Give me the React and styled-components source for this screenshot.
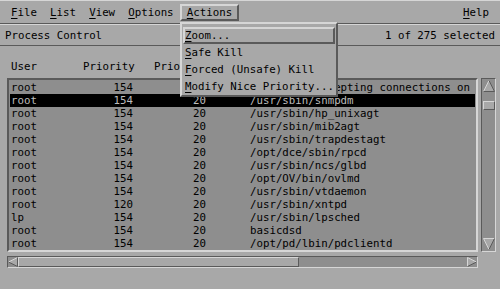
import React from "react";
import styled, { createGlobalStyle } from "styled-components";

const BG = "#a8a8a8";
const LIST = "#8e8e8e";
const LIGHT = "#d6d6d6";
const DARK = "#5a5a5a";

const Global = createGlobalStyle`
  html, body { margin: 0; padding: 0; background: ${BG}; }
  body { font-family: "DejaVu Sans Mono", "Liberation Mono", monospace; font-size: 10.75px; color: #000; }
`;

const Window = styled.div`
  position: relative;
  width: 500px;
  height: 289px;
  background: ${BG};
  display: flex;
  flex-direction: column;
  overflow: hidden;
`;

const MenuBar = styled.div`
  box-sizing: border-box;
  height: 24px;
  display: flex;
  align-items: center;
  padding: 1px 4.4px 0;
  border-top: 1px solid ${LIGHT};
  border-bottom: 1px solid ${DARK};
`;

const MenuItem = styled.div`
  box-sizing: border-box;
  height: 17px;
  line-height: 13px;
  padding: 0 4.6px;
  border: 2px solid transparent;
  white-space: pre;
  ${(p) =>
    p.$active &&
    `border-color: ${LIGHT} ${DARK} ${DARK} ${LIGHT};`}
  ${(p) => p.$right && `margin-left: auto;`}
`;

const Mn = styled.span`
  text-decoration: underline;
  text-underline-offset: 2px;
`;

const StatusBar = styled.div`
  box-sizing: border-box;
  height: 22px;
  display: flex;
  align-items: center;
  justify-content: space-between;
  padding: 0 5px;
  border-top: 1px solid ${LIGHT};
  border-bottom: 1px solid ${DARK};
  white-space: pre;
`;

const Content = styled.div`
  display: flex;
  flex-direction: column;
  padding: 0 0 0 7px;
`;

const HeaderRow = styled.div`
  margin-top: 14px;
  height: 13px;
  line-height: 13px;
  display: grid;
  grid-template-columns: 72px 71px 1fr;
  padding-left: 4px;
  white-space: pre;
`;

const ListArea = styled.div`
  margin-top: 5px;
  display: flex;
  gap: 3px;
  height: 174px;
`;

const ListBox = styled.div`
  box-sizing: border-box;
  width: 471px;
  height: 174px;
  background: ${LIST};
  border: 2px solid;
  border-color: ${DARK} ${LIGHT} ${LIGHT} ${DARK};
  padding-top: 1px;
  overflow: hidden;
`;

const Row = styled.div`
  height: 13px;
  line-height: 13px;
  margin: 0 1px;
  padding-left: 1px;
  display: grid;
  grid-template-columns: 80px 42px 117px 1fr;
  white-space: pre;
  overflow: hidden;
  background: ${(p) => (p.$selected ? "#000" : "transparent")};
  color: ${(p) => (p.$selected ? "#bdbdbd" : "#000")};
`;

const Cell = styled.span`
  text-align: ${(p) => (p.$right ? "right" : "left")};
  padding-left: ${(p) => p.$pad || 0}px;
  overflow: hidden;
`;

const VScroll = styled.div`
  box-sizing: border-box;
  width: 15px;
  height: 174px;
  background: ${LIST};
  border: 1px solid;
  border-color: ${DARK} ${LIGHT} ${LIGHT} ${DARK};
  display: flex;
  flex-direction: column;
  align-items: center;
  padding: 1px 0;
`;

const VThumb = styled.div`
  box-sizing: border-box;
  width: 12px;
  height: 9px;
  margin-top: 9px;
  background: ${BG};
  border: 1px solid;
  border-color: ${LIGHT} ${DARK} ${DARK} ${LIGHT};
`;

const Spacer = styled.div`
  flex: 1;
`;

const HScroll = styled.div`
  box-sizing: border-box;
  margin-top: 4px;
  width: 471px;
  height: 12px;
  background: ${LIST};
  border: 1px solid;
  border-color: ${DARK} ${LIGHT} ${LIGHT} ${DARK};
  display: flex;
  align-items: center;
`;

const HThumb = styled.div`
  box-sizing: border-box;
  width: 281px;
  height: 10px;
  background: ${BG};
  border: 1px solid;
  border-color: ${LIGHT} ${DARK} ${DARK} ${LIGHT};
`;

const Dropdown = styled.div`
  position: absolute;
  left: 180px;
  top: 22px;
  width: 158px;
  box-sizing: border-box;
  background: ${BG};
  border: 2px solid;
  border-color: ${LIGHT} ${DARK} ${DARK} ${LIGHT};
  padding: 3px 0 0;
  z-index: 5;
`;

const DropItem = styled.div`
  box-sizing: border-box;
  height: 17px;
  line-height: 13px;
  margin: 0 1px;
  border: 2px solid transparent;
  white-space: pre;
  ${(p) => p.$active && `border-color: ${LIGHT} ${DARK} ${DARK} ${LIGHT};`}
`;

const Arrow = ({ dir, size = 11 }) => {
  const s = size;
  let poly, light, dark;
  if (dir === "up") {
    poly = `${s / 2},0.5 ${s - 0.5},${s - 0.5} 0.5,${s - 0.5}`;
    light = `M0.5,${s - 0.5} L${s / 2},0.5`;
    dark = `M${s / 2},0.5 L${s - 0.5},${s - 0.5} L0.5,${s - 0.5}`;
  } else if (dir === "down") {
    poly = `0.5,0.5 ${s - 0.5},0.5 ${s / 2},${s - 0.5}`;
    light = `M${s / 2},${s - 0.5} L0.5,0.5 L${s - 0.5},0.5`;
    dark = `M${s - 0.5},0.5 L${s / 2},${s - 0.5}`;
  } else if (dir === "left") {
    poly = `0.5,${s / 2} ${s - 0.5},0.5 ${s - 0.5},${s - 0.5}`;
    light = `M0.5,${s / 2} L${s - 0.5},0.5`;
    dark = `M${s - 0.5},0.5 L${s - 0.5},${s - 0.5} L0.5,${s / 2}`;
  } else {
    poly = `0.5,0.5 ${s - 0.5},${s / 2} 0.5,${s - 0.5}`;
    light = `M0.5,${s - 0.5} L0.5,0.5 L${s - 0.5},${s / 2}`;
    dark = `M${s - 0.5},${s / 2} L0.5,${s - 0.5}`;
  }
  return (
    <svg width={s} height={s} viewBox={`0 0 ${s} ${s}`} style={{ display: "block", flex: "none" }}>
      <polygon points={poly} fill={BG} />
      <path d={light} stroke={LIGHT} strokeWidth="1" fill="none" />
      <path d={dark} stroke={DARK} strokeWidth="1" fill="none" />
    </svg>
  );
};

const rows = [
  ["root", "154", "20", "sendmail: accepting connections on"],
  ["root", "154", "20", "/usr/sbin/snmpdm", true],
  ["root", "154", "20", "/usr/sbin/hp_unixagt"],
  ["root", "154", "20", "/usr/sbin/mib2agt"],
  ["root", "154", "20", "/usr/sbin/trapdestagt"],
  ["root", "154", "20", "/opt/dce/sbin/rpcd"],
  ["root", "154", "20", "/usr/sbin/ncs/glbd"],
  ["root", "154", "20", "/opt/OV/bin/ovlmd"],
  ["root", "154", "20", "/usr/sbin/vtdaemon"],
  ["root", "120", "20", "/usr/sbin/xntpd"],
  ["lp", "154", "20", "/usr/sbin/lpsched"],
  ["root", "154", "20", "basicdsd"],
  ["root", "154", "20", "/opt/pd/lbin/pdclientd"],
];

const M = ({ c, rest }) => (
  <>
    <Mn>{c}</Mn>
    {rest}
  </>
);

export default function App() {
  return (
    <Window>
      <Global />
      <MenuBar>
        <MenuItem><M c="F" rest="ile" /></MenuItem>
        <MenuItem><M c="L" rest="ist" /></MenuItem>
        <MenuItem><M c="V" rest="iew" /></MenuItem>
        <MenuItem><M c="O" rest="ptions" /></MenuItem>
        <MenuItem $active><M c="A" rest="ctions" /></MenuItem>
        <MenuItem $right><M c="H" rest="elp" /></MenuItem>
      </MenuBar>
      <StatusBar>
        <span>Process Control</span>
        <span>1 of 275 selected</span>
      </StatusBar>
      <Content>
        <HeaderRow>
          <span>User</span>
          <span>Priority</span>
          <span>Priority</span>
        </HeaderRow>
        <ListArea>
          <ListBox>
            {rows.map((r, i) => (
              <Row key={i} $selected={!!r[4]}>
                <Cell>{r[0]}</Cell>
                <Cell $right>{r[1]}</Cell>
                <Cell $pad={60}>{r[2]}</Cell>
                <Cell>{r[3]}</Cell>
              </Row>
            ))}
          </ListBox>
          <VScroll>
            <Arrow dir="up" size={12} />
            <VThumb />
            <Spacer />
            <Arrow dir="down" size={12} />
          </VScroll>
        </ListArea>
        <HScroll>
          <Arrow dir="left" size={10} />
          <HThumb />
          <Spacer />
          <Arrow dir="right" size={10} />
        </HScroll>
      </Content>
      <Dropdown>
        <DropItem $active><M c="Z" rest="oom..." /></DropItem>
        <DropItem><M c="S" rest="afe Kill" /></DropItem>
        <DropItem><M c="F" rest="orced (Unsafe) Kill" /></DropItem>
        <DropItem><M c="M" rest="odify Nice Priority..." /></DropItem>
      </Dropdown>
    </Window>
  );
}
